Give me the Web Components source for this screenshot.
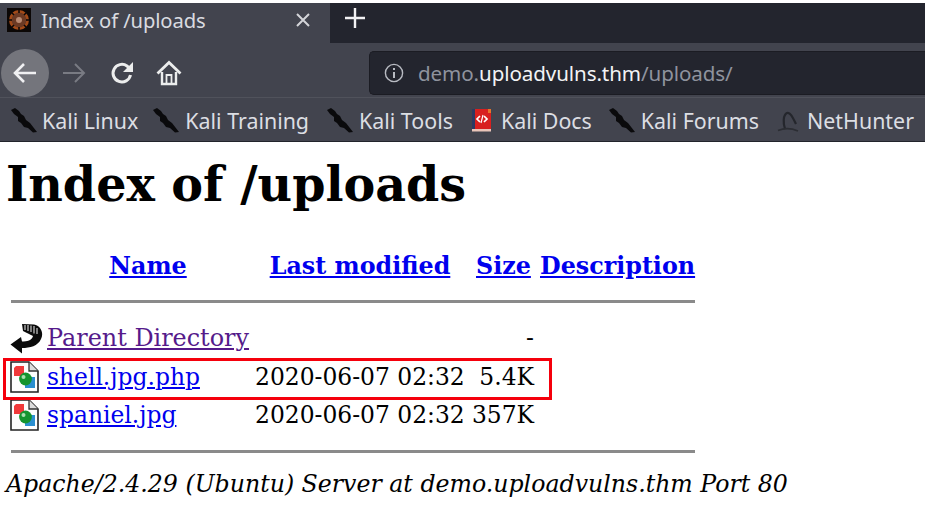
<!DOCTYPE html>
<html>
<head>
<meta charset="utf-8">
<title>Index of /uploads</title>
<style>
  html, body { margin: 0; padding: 0; background: #fff; overflow: hidden; }
</style>
</head>
<body>
<browser-window>
  <browser-tabs title-text="Index of /uploads"></browser-tabs>
  <browser-nav></browser-nav>
  <bookmark-bar>
    <bookmark-item icon="kali" style="--icon-gap:5px">Kali Linux</bookmark-item>
    <bookmark-item icon="kali" style="margin-left:15px">Kali Training</bookmark-item>
    <bookmark-item icon="kali" style="margin-left:18px">Kali Tools</bookmark-item>
    <bookmark-item icon="docs" style="margin-left:18px;--icon-gap:9px">Kali Docs</bookmark-item>
    <bookmark-item icon="kali" style="margin-left:17px">Kali Forums</bookmark-item>
    <bookmark-item icon="hunter" style="margin-left:18px;--icon-gap:8px">NetHunter</bookmark-item>
  </bookmark-bar>
</browser-window>
<index-page heading="Index of /uploads">
  <index-row icon="back" name="Parent Directory" visited size="-" style="--name-size:23.9px"></index-row>
  <index-row icon="image" name="shell.jpg.php" modified="2020-06-07 02:32" size="5.4K"></index-row>
  <index-row icon="image" name="spaniel.jpg" modified="2020-06-07 02:32" size="357K"></index-row>
</index-page>

<script>
const UI_FONT = `"Noto Sans", "Open Sans", sans-serif`;
const SERIF = `"DejaVu Serif", serif`;

const ICONS = {
  kali: `<svg width="26" height="25" viewBox="0 0 26 25"><path d="M0 2 L4 0 L8 3 L10 6 L13 8 L15 12 L19 15 L26 24 L22 24.5 L17 20 L13 19 L10 15 L7 13 L7 9 L3 6 Z" fill="#0a0a0c"/></svg>`,
  docs: `<svg width="21" height="25" viewBox="0 0 21 25"><path d="M1 1 H20 V21 H1 Z" fill="#d8201f"/><path d="M1 1 H4 V21 H1 Z" fill="#2b3a63"/><path d="M1 21 H20 V23.5 H1 Z" fill="#e9c5b9"/><path d="M17 1 H20 V5 H17 Z" fill="#e8742a"/><path d="M9 8 L6 11 L9 14 M13 8 L16 11 L13 14" fill="none" stroke="#fff" stroke-width="1.7"/><path d="M12 7 L10 15" stroke="#fff" stroke-width="1.2"/></svg>`,
  hunter: `<svg width="22" height="24" viewBox="0 0 22 24"><path d="M8 20 C6 14 6 6 10 4 C13 3 15 7 19 15" fill="none" stroke="#24262c" stroke-width="2.2"/><path d="M1 21.5 C7 19 14 19 21 22" fill="none" stroke="#2b2d33" stroke-width="1.6"/></svg>`,
  back: `<svg width="33" height="31" viewBox="0 0 33 31"><path d="M12 1 L24 1.5 C31 3 34 10 31 16 C28 23 20 25 12 25 L12 30.5 L0.5 21.5 L11 14 L12 18.5 C17 18.5 22 17.5 23 13 L13 8 Z" fill="#0b0b0b"/><path d="M15 2 V7 M18 2 V8 M21 2.5 V9 M24 3 V10.5 M27 5 V11" stroke="#ddd" stroke-width="1.1"/></svg>`,
  image: `<svg width="29" height="32" viewBox="0 0 29 32"><path d="M1 1 H19 L28 10 V31 H1 Z" fill="#fdfdfd" stroke="#222" stroke-width="1.6"/><path d="M19 1 V10 H28" fill="#dcdcdc" stroke="#333" stroke-width="1.3"/><path d="M6 5 H14 V15 H4 V7 Z" fill="#f0393a"/><path d="M15 16 H25 V27 H15 Z" fill="#2a8fd0"/><circle cx="15.5" cy="18" r="6.4" fill="#14942f"/><circle cx="13.5" cy="16" r="2" fill="#a8e0b0"/></svg>`
};

class BrowserWindow extends HTMLElement {
  constructor() {
    super();
    this.attachShadow({ mode: "open" });
    this.shadowRoot.innerHTML = `
      <style>
        :host { display: block; width: 925px; margin-top: 3px; background: #42444e; font-family: ${UI_FONT}; border-bottom: 1px solid #22242b; }
      </style>
      <slot></slot>`;
  }
}

class BrowserTabs extends HTMLElement {
  constructor() {
    super();
    this.attachShadow({ mode: "open" });
    this.shadowRoot.innerHTML = `
      <style>
        :host { display: flex; height: 40px; background: #23252e; color: #e8e9ec; }
        .tab { width: 330px; background: #42444e; display: flex; align-items: center; padding: 0 19px 7px 7px; box-sizing: border-box; }
        .fav { width: 24px; height: 24px; flex: none; margin-right: 10px; }
        .label { flex: 1; font-size: 20.2px; letter-spacing: -.1px; color: #d9dbe0; white-space: nowrap; }
        .new { width: 50px; display: flex; justify-content: center; padding-top: 4px; height: 30px; }
      </style>
      <div class="tab">
        <svg class="fav" viewBox="0 0 24 24">
          <rect width="24" height="24" fill="#0b0706"/>
          <circle cx="12" cy="12" r="10" fill="#a34a18"/>
          <circle cx="12" cy="12" r="7.5" fill="#6c3a24"/>
          <circle cx="12" cy="12" r="3" fill="#b98a72"/>
          <path d="M12 1 V5 M12 19 V23 M1 12 H5 M19 12 H23 M4 4 L7 7 M17 17 L20 20 M20 4 L17 7 M7 17 L4 20" stroke="#0b0706" stroke-width="1.5"/>
        </svg>
        <span class="label">${this.getAttribute("title-text")}</span>
        <svg width="16" height="16" viewBox="0 0 16 16"><path d="M2 2 L14 14 M14 2 L2 14" stroke="#d4d5d9" stroke-width="2"/></svg>
      </div>
      <div class="new">
        <svg width="22" height="22" viewBox="0 0 22 22"><path d="M11 1 V21 M1 11 H21" stroke="#f2f2f4" stroke-width="2.4"/></svg>
      </div>`;
  }
}

class BrowserNav extends HTMLElement {
  constructor() {
    super();
    this.attachShadow({ mode: "open" });
    this.shadowRoot.innerHTML = `
      <style>
        :host { display: flex; align-items: center; height: 54px; box-sizing: border-box; padding: 6px 0 0 1px; }
        .back { width: 48px; height: 48px; border-radius: 50%; background: #74757c; display: flex; align-items: center; justify-content: center; flex: none; }
        .btn { display: flex; flex: none; }
        .url { flex: 1; height: 44px; margin-left: 187px; background: #23252e; border: 1px solid #1b1c23; border-right: 0; border-radius: 5px 0 0 5px; display: flex; align-items: center; padding-left: 14px; font-size: 20.6px; letter-spacing: -.1px; color: #8f939e; white-space: nowrap; box-sizing: border-box; }
        .url svg { margin-right: 14px; flex: none; }
        b { font-weight: 400; color: #f2f3f5; }
      </style>
      <div class="back">
        <svg width="26" height="26" viewBox="0 0 26 26"><path d="M24 13 H3 M12 4 L3 13 L12 22" fill="none" stroke="#f0f0f2" stroke-width="2.6"/></svg>
      </div>
      <svg class="btn" style="margin-left:11px" width="26" height="26" viewBox="0 0 26 26"><path d="M24 13 H3 M15 4 L24 13 L15 22" fill="none" stroke="#797b83" stroke-width="2"/></svg>
      <svg class="btn" style="margin-left:23px" width="26" height="26" viewBox="0 0 26 26"><path d="M21.5 15 A8.8 8.8 0 1 1 18 6 L22 10" fill="none" stroke="#eceded" stroke-width="3"/><path d="M24 2 V12 H14 Z" fill="#eceded"/></svg>
      <svg class="btn" style="margin-left:21px" width="26" height="26" viewBox="0 0 26 26"><path d="M1.5 13.5 L13 2.5 L24.5 13.5" fill="none" stroke="#eceded" stroke-width="2.8"/><path d="M6 12 V24 H20 V12" fill="none" stroke="#eceded" stroke-width="2.4"/><path d="M10.5 24 V15 H15.5 V24" fill="none" stroke="#eceded" stroke-width="1.8"/></svg>
      <div class="url">
        <svg width="20" height="20" viewBox="0 0 20 20"><circle cx="10" cy="10" r="8.6" fill="none" stroke="#b8bbc2" stroke-width="1.4"/><path d="M10 9 V15 M10 5 V7" stroke="#b8bbc2" stroke-width="2"/></svg>
        <span>demo.<b>uploadvulns.thm</b>/uploads/</span>
      </div>`;
  }
}

class BookmarkBar extends HTMLElement {
  constructor() {
    super();
    this.attachShadow({ mode: "open" });
    this.shadowRoot.innerHTML = `
      <style>
        :host { display: flex; height: 44px; align-items: center; padding: 2px 0 0 11px; box-sizing: border-box; border-top: 1px solid #50525b; }
      </style>
      <slot></slot>`;
  }
}

class BookmarkItem extends HTMLElement {
  constructor() {
    super();
    this.attachShadow({ mode: "open" });
    this.shadowRoot.innerHTML = `
      <style>
        :host { display: flex; align-items: center; gap: var(--icon-gap, 6px); font-size: 21.4px; color: #dcdee3; white-space: nowrap; }
        svg { display: block; }
        span { display: flex; }
      </style>
      <span>${ICONS[this.getAttribute("icon")]}</span><slot></slot>`;
  }
}

class IndexPage extends HTMLElement {
  constructor() {
    super();
    this.attachShadow({ mode: "open" });
    this.shadowRoot.innerHTML = `
      <style>
        :host { display: block; font-family: ${SERIF}; color: #000; padding: 14px 0 0 6px; position: relative; font-size: 23.8px; }
        h1 { font-size: 47.6px; line-height: 56px; margin: 0; font-weight: 700; white-space: nowrap; }
        .listing { width: 684px; margin: 39px 0 0 5px; }
        .head { display: grid; grid-template-columns: 36px 202px 222px 69px 1fr; height: 30px; align-items: center; font-weight: 700; white-space: nowrap; }
        .head a { color: #0000ee; text-decoration: underline; }
        .head .c { text-align: center; }
        hr { height: 3px; border: 0; background: #8a8a8a; margin: 0; }
        .top { margin: 19px 0 16px; }
        .bottom { margin: 15px 0 16px; }
        address { font-style: italic; font-size: 23.65px; line-height: 30px; white-space: nowrap; }
        .mark { position: absolute; left: 3px; top: 216px; width: 549px; height: 42px; box-sizing: border-box; border: 3px solid #f5000c; }
      </style>
      <h1>${this.getAttribute("heading")}</h1>
      <div class="listing">
        <div class="head">
          <span></span>
          <span class="c"><a>Name</a></span>
          <span class="c"><a>Last modified</a></span>
          <span style="padding-left:5px"><a>Size</a></span>
          <span><a>Description</a></span>
        </div>
        <hr class="top">
        <slot></slot>
        <hr class="bottom">
      </div>
      <address>Apache/2.4.29 (Ubuntu) Server at demo.uploadvulns.thm Port 80</address>
      <div class="mark"></div>`;
  }
}

class IndexRow extends HTMLElement {
  constructor() {
    super();
    this.attachShadow({ mode: "open" });
    const g = (a) => this.getAttribute(a) || "";
    this.shadowRoot.innerHTML = `
      <style>
        :host { display: grid; grid-template-columns: 36px 208px 216px 63px; height: 38.5px; align-items: center; white-space: nowrap; font-size: 23.4px; }
        a { font-size: var(--name-size, 23.4px); color: ${this.hasAttribute("visited") ? "#551a8b" : "#0000ee"}; text-decoration: underline; }
        .s { text-align: right; }
        svg { display: block; margin-left: -1px; }
      </style>
      <span>${ICONS[g("icon")]}</span>
      <span><a>${g("name")}</a></span>
      <span>${g("modified")}</span>
      <span class="s">${g("size")}</span>`;
  }
}

customElements.define("browser-window", BrowserWindow);
customElements.define("browser-tabs", BrowserTabs);
customElements.define("browser-nav", BrowserNav);
customElements.define("bookmark-bar", BookmarkBar);
customElements.define("bookmark-item", BookmarkItem);
customElements.define("index-page", IndexPage);
customElements.define("index-row", IndexRow);
</script>
</body>
</html>
